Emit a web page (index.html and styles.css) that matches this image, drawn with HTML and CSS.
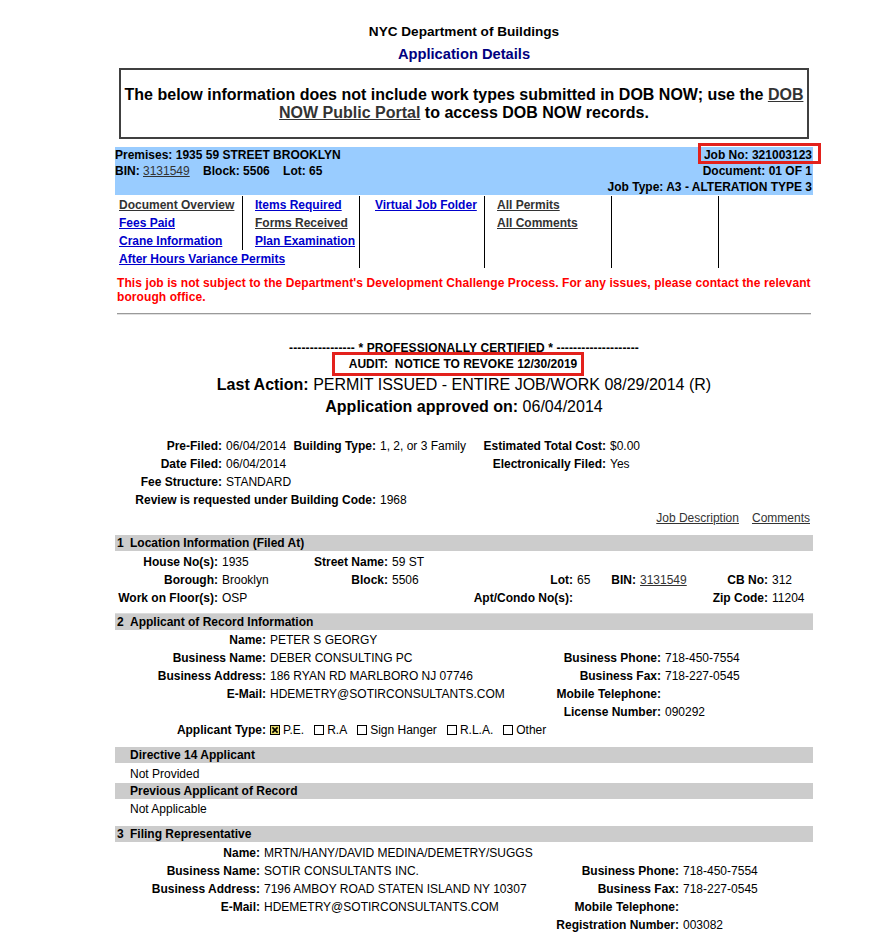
FILE: index.html
```html
<!DOCTYPE html>
<html lang="en">
<head>
  <meta charset="UTF-8" />
  <title>Application Details</title>
  <link rel="stylesheet" href="styles.css">
</head>
<body>
<div class="page">

  <div class="agency">NYC Department of Buildings</div>
  <div class="page-title">Application Details</div>

  <div class="notice">
    The below information does not include work types submitted in DOB NOW; use the <a href="#">DOB NOW Public Portal</a> to access DOB NOW records.
  </div>

  <!-- premises bar -->
  <div class="premises">
    <div class="premises-left">
      <div>Premises: 1935 59 STREET BROOKLYN</div>
      <div>BIN: <a class="plain" href="#">3131549</a>&nbsp;&nbsp;&nbsp; Block: 5506&nbsp;&nbsp;&nbsp; Lot: 65</div>
    </div>
    <div class="premises-right">
      <div><span class="flag">Job No: 321003123</span></div>
      <div>Document: 01 OF 1</div>
      <div>Job Type: A3 - ALTERATION TYPE 3</div>
    </div>
  </div>

  <!-- job links -->
  <div class="job-links">
    <div class="links-main">
      <div class="cell first"><a class="visited" href="#">Document Overview</a></div>
      <div class="cell second"><a href="#">Items Required</a></div>
      <div class="cell first"><a href="#">Fees Paid</a></div>
      <div class="cell second"><a class="visited" href="#">Forms Received</a></div>
      <div class="cell first"><a href="#">Crane Information</a></div>
      <div class="cell second"><a href="#">Plan Examination</a></div>
      <div class="cell wide"><a href="#">After Hours Variance Permits</a></div>
    </div>
    <div class="links-col col3">
      <div class="cell"><a href="#">Virtual Job Folder</a></div>
    </div>
    <div class="links-col col4">
      <div class="cell"><a class="visited" href="#">All Permits</a></div>
      <div class="cell"><a class="visited" href="#">All Comments</a></div>
    </div>
    <div class="links-col"></div>
    <div class="links-col last"></div>
  </div>

  <p class="alert">This job is not subject to the Department's Development Challenge Process. For any issues, please contact the relevant borough office.</p>

  <div class="divider"></div>

  <!-- status -->
  <div class="status">
    <div class="certified">---------------- * PROFESSIONALLY CERTIFIED * --------------------</div>
    <div class="audit">AUDIT:&nbsp; NOTICE TO REVOKE 12/30/2019</div>
    <div class="last-action first-action"><b>Last Action:</b> PERMIT ISSUED - ENTIRE JOB/WORK 08/29/2014 (R)</div>
    <div class="last-action"><b>Application approved on:</b> 06/04/2014</div>
  </div>

  <div class="grid details">
    <b>Pre-Filed:</b><span>06/04/2014</span><b>Building Type:</b><span>1, 2, or 3 Family</span><b>Estimated Total Cost:</b><span>$0.00</span>
    <b>Date Filed:</b><span>06/04/2014</span><b></b><span></span><b>Electronically Filed:</b><span>Yes</span>
    <b>Fee Structure:</b><span>STANDARD</span><b></b><span></span><b></b><span></span>
    <b class="span3">Review is requested under Building Code:</b><span>1968</span><b></b><span></span>
  </div>

  <div class="extra-links">
    <a class="visited" href="#">Job Description</a>
    <a class="visited" href="#">Comments</a>
  </div>

  <!-- 1 location -->
  <div class="section-head"><span class="num">1</span>Location Information (Filed At)</div>
  <div class="grid location">
    <b>House No(s):</b><span>1935</span><b>Street Name:</b><span>59 ST</span><b></b><span></span><b></b><span></span><b></b><span></span>
    <b>Borough:</b><span>Brooklyn</span><b>Block:</b><span>5506</span><b>Lot:</b><span>65</span><b>BIN:</b><span><a class="plain" href="#">3131549</a></span><b>CB No:</b><span>312</span>
    <b>Work on Floor(s):</b><span>OSP</span><b></b><span></span><b>Apt/Condo No(s):</b><span></span><b></b><span></span><b>Zip Code:</b><span>11204</span>
  </div>

  <!-- 2 applicant -->
  <div class="section-head ruled"><span class="num">2</span>Applicant of Record Information</div>
  <div class="grid applicant">
    <b>Name:</b><span>PETER S GEORGY</span><b></b><span></span>
    <b>Business Name:</b><span>DEBER CONSULTING PC</span><b>Business Phone:</b><span>718-450-7554</span>
    <b>Business Address:</b><span>186 RYAN RD MARLBORO NJ 07746</span><b>Business Fax:</b><span>718-227-0545</span>
    <b>E-Mail:</b><span>HDEMETRY@SOTIRCONSULTANTS.COM</span><b>Mobile Telephone:</b><span></span>
    <b></b><span></span><b>License Number:</b><span>090292</span>
    <b>Applicant Type:</b>
    <div class="checks">
      <div class="check">
        <svg class="box" width="10" height="10" viewBox="0 0 10 10">
          <rect x="0.5" y="0.5" width="9" height="9" fill="#e9dd6b" stroke="#000"/>
          <path d="M2.4 2.4 L7.6 7.6 M7.6 2.4 L2.4 7.6" stroke="#000" stroke-width="1.6"/>
        </svg>P.E.
      </div>
      <div class="check"><i class="box empty"></i>R.A</div>
      <div class="check"><i class="box empty"></i>Sign Hanger</div>
      <div class="check"><i class="box empty"></i>R.L.A.</div>
      <div class="check"><i class="box empty"></i>Other</div>
    </div>
  </div>

  <div class="section-head sub">Directive 14 Applicant</div>
  <div class="sub-text">Not Provided</div>
  <div class="section-head sub tight">Previous Applicant of Record</div>
  <div class="sub-text last-sub">Not Applicable</div>

  <!-- 3 filing rep -->
  <div class="section-head"><span class="num">3</span>Filing Representative</div>
  <div class="grid filing">
    <b>Name:</b><span>MRTN/HANY/DAVID MEDINA/DEMETRY/SUGGS</span><b></b><span></span>
    <b>Business Name:</b><span>SOTIR CONSULTANTS INC.</span><b>Business Phone:</b><span>718-450-7554</span>
    <b>Business Address:</b><span>7196 AMBOY ROAD STATEN ISLAND NY 10307</span><b>Business Fax:</b><span>718-227-0545</span>
    <b>E-Mail:</b><span>HDEMETRY@SOTIRCONSULTANTS.COM</span><b>Mobile Telephone:</b><span></span>
    <b></b><span></span><b>Registration Number:</b><span>003082</span>
  </div>

</div>
</body>
</html>
```

FILE: styles.css
```css
* {
  box-sizing: border-box;
  margin: 0;
  padding: 0;
}

body {
  font-family: "Liberation Sans", Arial, sans-serif;
  font-size: 12px;
  color: #000;
  background: #fff;
}

.page {
  width: 698px;
  margin-left: 115px;
  padding-top: 24px;
}

a {
  color: #0000cc;
}

a.visited,
a.plain {
  color: #333;
}

a.plain {
  font-weight: normal;
}

/* heading */
.agency {
  font-size: 13.6px;
  font-weight: bold;
  line-height: 16px;
  text-align: center;
}

.page-title {
  margin-top: 4px;
  font-size: 14.7px;
  font-weight: bold;
  line-height: 20px;
  color: #000080;
  text-align: center;
}

.notice {
  margin: 4px 4px 0;
  padding: 16px 0 15px;
  border: 2px solid #404040;
  font-size: 16px;
  font-weight: bold;
  line-height: 18px;
  text-align: center;
}

.notice a {
  color: #333;
}

/* premises bar */
.premises {
  margin-top: 8px;
  display: flex;
  justify-content: space-between;
  background: #99ccff;
  font-weight: bold;
  line-height: 16px;
}

.premises-right {
  text-align: right;
  padding-right: 1px;
}

.flag {
  position: relative;
}

.flag::after {
  content: "";
  position: absolute;
  left: -6px;
  right: -9px;
  top: -5px;
  bottom: -2px;
  border: 3px solid #e3211c;
}

/* job links */
.job-links {
  margin-top: 1px;
  display: grid;
  grid-template-columns: 245px 125px 127px 107px 1fr;
  font-weight: bold;
}

.job-links .cell {
  height: 18px;
  line-height: 18px;
  white-space: nowrap;
}

.links-main {
  display: grid;
  grid-template-columns: 128px 1fr;
  grid-auto-rows: 18px;
  border-right: 1px solid #000;
}

.links-main .first {
  padding-left: 4px;
  border-right: 1px solid #000;
}

.links-main .second {
  padding-left: 12px;
}

.links-main .wide {
  grid-column: 1 / 3;
  padding-left: 4px;
}

.links-col {
  border-right: 1px solid #000;
  height: 72px;
}

.links-col.last {
  border-right: none;
}

.col3 {
  padding-left: 15px;
}

.col4 {
  padding-left: 12px;
}

.alert {
  margin-top: 8px;
  padding-left: 2px;
  color: #ff0000;
  font-weight: bold;
  line-height: 14px;
  letter-spacing: 0.09px;
}

.divider {
  margin: 9px 2px 0;
  border-top: 1px solid #9a9a9a;
  border-bottom: 1px solid #e0e0e0;
}

/* status */
.status {
  margin-top: 26px;
  text-align: center;
}

.certified {
  font-weight: bold;
  line-height: 14px;
  letter-spacing: 0.12px;
}

.audit {
  display: inline-block;
  position: relative;
  margin: -3px 12px 0 0;
  padding: 0 4px 0 14px;
  border: 3px solid #e3211c;
  background: #fff;
  font-weight: bold;
  line-height: 18px;
}

.last-action {
  font-size: 16px;
  line-height: 22px;
}

.first-action {
  margin-top: -2px;
}

/* label / value grids */
.grid {
  display: grid;
  grid-auto-rows: 18px;
  line-height: 18px;
  white-space: nowrap;
}

.grid b {
  text-align: right;
}

.grid span {
  padding-left: 4px;
}

.details {
  margin-top: 19px;
  grid-template-columns: 107px 68px 86px 104px 126px 1fr;
}

.details .span3 {
  grid-column: 1 / 4;
}

.extra-links {
  display: flex;
  justify-content: flex-end;
  gap: 13px;
  padding-right: 3px;
  line-height: 18px;
}

.section-head {
  margin-top: 8px;
  height: 16px;
  line-height: 16px;
  padding-left: 2px;
  background: #cccccc;
  font-weight: bold;
}

.section-head .num {
  display: inline-block;
  width: 13px;
}

.section-head.ruled {
  margin-top: 6px;
  border-top: 1px solid #dcdcdc;
  height: 17px;
}

.section-head.sub {
  margin-top: 8px;
  padding-left: 15px;
}

.section-head.tight {
  margin-top: 0;
}

.sub-text {
  margin-top: 2px;
  padding-left: 15px;
  line-height: 18px;
}

.sub-text.last-sub {
  margin-top: 1px;
}

.location {
  margin-top: 2px;
  grid-template-columns: 103px 92px 78px 82px 103px 34px 29px 64px 68px 1fr;
}

.applicant {
  margin-top: 1px;
  grid-template-columns: 151px 274px 121px 1fr;
}

.filing {
  margin-top: 2px;
  grid-template-columns: 145px 280px 139px 1fr;
}

/* applicant type check boxes */
.checks {
  grid-column: 2 / 5;
  padding-left: 4px;
  display: flex;
  align-items: center;
  gap: 10px;
}

.check {
  display: flex;
  align-items: center;
  gap: 3px;
}

.box {
  display: block;
  width: 10px;
  height: 10px;
}

.box.empty {
  border: 1px solid #000;
}
```
